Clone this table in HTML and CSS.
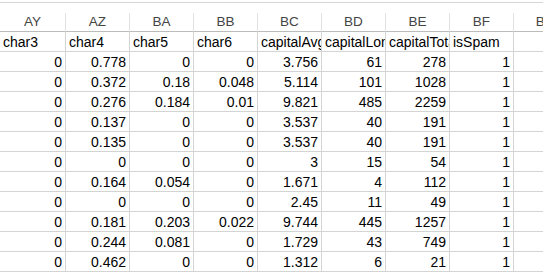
FILE: index.html
```html
<!DOCTYPE html>
<html>
<head>
<meta charset="utf-8">
<link rel="stylesheet" href="styles.css">
</head>
<body>
<div class="sheet">
  <div class="topline"></div>
  <div class="gap"></div>
  <div class="grid">
    <div class="ch">AY</div><div class="ch">AZ</div><div class="ch">BA</div><div class="ch">BB</div><div class="ch">BC</div><div class="ch">BD</div><div class="ch">BE</div><div class="ch">BF</div><div class="ch">BG</div>

    <div class="c t">char3</div><div class="c t">char4</div><div class="c t">char5</div><div class="c t">char6</div><div class="c t">capitalAvg</div><div class="c t">capitalLong</div><div class="c t">capitalTotal</div><div class="c t">isSpam</div><div class="c"></div>

    <div class="c n">0</div><div class="c n">0.778</div><div class="c n">0</div><div class="c n">0</div><div class="c n">3.756</div><div class="c n">61</div><div class="c n">278</div><div class="c n">1</div><div class="c"></div>
    <div class="c n">0</div><div class="c n">0.372</div><div class="c n">0.18</div><div class="c n">0.048</div><div class="c n">5.114</div><div class="c n">101</div><div class="c n">1028</div><div class="c n">1</div><div class="c"></div>
    <div class="c n">0</div><div class="c n">0.276</div><div class="c n">0.184</div><div class="c n">0.01</div><div class="c n">9.821</div><div class="c n">485</div><div class="c n">2259</div><div class="c n">1</div><div class="c"></div>
    <div class="c n">0</div><div class="c n">0.137</div><div class="c n">0</div><div class="c n">0</div><div class="c n">3.537</div><div class="c n">40</div><div class="c n">191</div><div class="c n">1</div><div class="c"></div>
    <div class="c n">0</div><div class="c n">0.135</div><div class="c n">0</div><div class="c n">0</div><div class="c n">3.537</div><div class="c n">40</div><div class="c n">191</div><div class="c n">1</div><div class="c"></div>
    <div class="c n">0</div><div class="c n">0</div><div class="c n">0</div><div class="c n">0</div><div class="c n">3</div><div class="c n">15</div><div class="c n">54</div><div class="c n">1</div><div class="c"></div>
    <div class="c n">0</div><div class="c n">0.164</div><div class="c n">0.054</div><div class="c n">0</div><div class="c n">1.671</div><div class="c n">4</div><div class="c n">112</div><div class="c n">1</div><div class="c"></div>
    <div class="c n">0</div><div class="c n">0</div><div class="c n">0</div><div class="c n">0</div><div class="c n">2.45</div><div class="c n">11</div><div class="c n">49</div><div class="c n">1</div><div class="c"></div>
    <div class="c n">0</div><div class="c n">0.181</div><div class="c n">0.203</div><div class="c n">0.022</div><div class="c n">9.744</div><div class="c n">445</div><div class="c n">1257</div><div class="c n">1</div><div class="c"></div>
    <div class="c n">0</div><div class="c n">0.244</div><div class="c n">0.081</div><div class="c n">0</div><div class="c n">1.729</div><div class="c n">43</div><div class="c n">749</div><div class="c n">1</div><div class="c"></div>
    <div class="c n">0</div><div class="c n">0.462</div><div class="c n">0</div><div class="c n">0</div><div class="c n">1.312</div><div class="c n">6</div><div class="c n">21</div><div class="c n">1</div><div class="c"></div>
  </div>
</div>
</body>
</html>
```
FILE: styles.css
```css
* { box-sizing: border-box; }
html, body {
  margin: 0;
  padding: 0;
  background: #ffffff;
}
body {
  width: 543px;
  height: 273px;
  overflow: hidden;
  font-family: "Liberation Sans", Arial, sans-serif;
  font-size: 14px;
  color: #000;
}
.sheet {
  padding-top: 2px;
  width: 543px;
  overflow: hidden;
}
.topline {
  height: 1px;
  background: #d4d4d4;
}
.gap {
  height: 10px;
}
.grid {
  display: grid;
  grid-template-columns: 66px repeat(8, 64px);
  grid-auto-rows: 20px;
  grid-template-rows: 19px;
  width: 578px;
}
.ch {
  border-right: 1px solid #e1e1e1;
  border-bottom: 1px solid #bcbcbc;
  color: #444444;
  text-align: center;
  line-height: 18px;
  font-size: 13.5px;
  white-space: nowrap;
  overflow: hidden;
}
.c {
  border-right: 1px solid #d4d4d4;
  border-bottom: 1px solid #d4d4d4;
  line-height: 20px;
  white-space: nowrap;
  overflow: hidden;
}
.t {
  padding-left: 3px;
  text-align: left;
}
.n {
  padding-right: 3px;
  text-align: right;
}
```
